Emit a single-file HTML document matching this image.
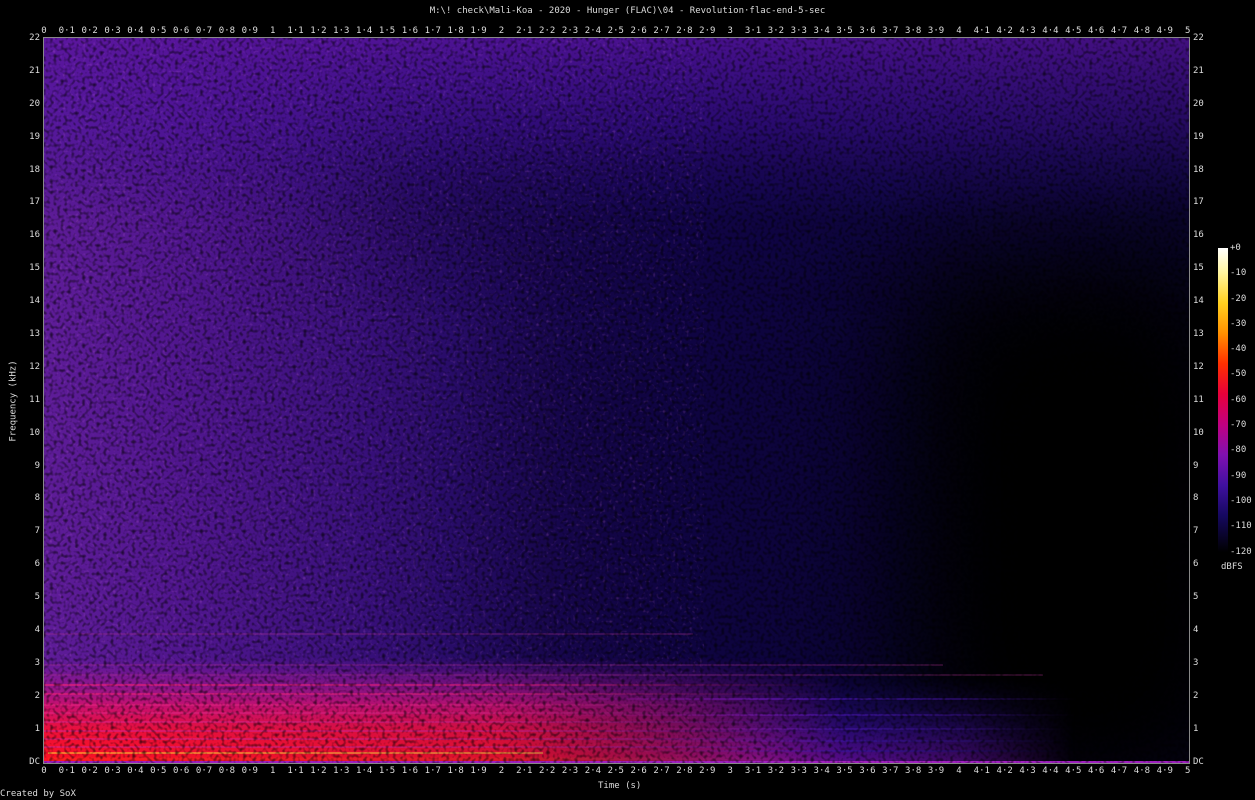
<!DOCTYPE html>
<html><head><meta charset="utf-8"><style>
body{margin:0;background:#000;width:1255px;height:800px;overflow:hidden;position:relative;font-family:"DejaVu Sans Mono","Liberation Mono",monospace;font-size:9px;color:#ddd}
.a{position:absolute;white-space:nowrap}
.trow{position:absolute;left:32.5px;display:flex}
.trow span{width:22.88px;text-align:center;display:block;font-size:9px}
.fl{position:absolute;top:22px;width:30px}
.fl div{height:32.9px;line-height:32.9px;font-size:9px}
.cb{position:absolute;left:1230px;top:242px}
.cb div{height:25.3px;line-height:12px;font-size:9px}
</style></head><body>
<div class="a" style="left:0;width:1255px;text-align:center;top:6px">M:\! check\Mali-Koa - 2020 - Hunger (FLAC)\04 - Revolution·flac-end-5-sec</div>
<div class="trow" style="top:26px"><span>0</span><span>0·1</span><span>0·2</span><span>0·3</span><span>0·4</span><span>0·5</span><span>0·6</span><span>0·7</span><span>0·8</span><span>0·9</span><span>1</span><span>1·1</span><span>1·2</span><span>1·3</span><span>1·4</span><span>1·5</span><span>1·6</span><span>1·7</span><span>1·8</span><span>1·9</span><span>2</span><span>2·1</span><span>2·2</span><span>2·3</span><span>2·4</span><span>2·5</span><span>2·6</span><span>2·7</span><span>2·8</span><span>2·9</span><span>3</span><span>3·1</span><span>3·2</span><span>3·3</span><span>3·4</span><span>3·5</span><span>3·6</span><span>3·7</span><span>3·8</span><span>3·9</span><span>4</span><span>4·1</span><span>4·2</span><span>4·3</span><span>4·4</span><span>4·5</span><span>4·6</span><span>4·7</span><span>4·8</span><span>4·9</span><span>5</span></div>
<div class="trow" style="top:766px"><span>0</span><span>0·1</span><span>0·2</span><span>0·3</span><span>0·4</span><span>0·5</span><span>0·6</span><span>0·7</span><span>0·8</span><span>0·9</span><span>1</span><span>1·1</span><span>1·2</span><span>1·3</span><span>1·4</span><span>1·5</span><span>1·6</span><span>1·7</span><span>1·8</span><span>1·9</span><span>2</span><span>2·1</span><span>2·2</span><span>2·3</span><span>2·4</span><span>2·5</span><span>2·6</span><span>2·7</span><span>2·8</span><span>2·9</span><span>3</span><span>3·1</span><span>3·2</span><span>3·3</span><span>3·4</span><span>3·5</span><span>3·6</span><span>3·7</span><span>3·8</span><span>3·9</span><span>4</span><span>4·1</span><span>4·2</span><span>4·3</span><span>4·4</span><span>4·5</span><span>4·6</span><span>4·7</span><span>4·8</span><span>4·9</span><span>5</span></div>
<div class="fl" style="left:10px;text-align:right"><div>22</div><div>21</div><div>20</div><div>19</div><div>18</div><div>17</div><div>16</div><div>15</div><div>14</div><div>13</div><div>12</div><div>11</div><div>10</div><div>9</div><div>8</div><div>7</div><div>6</div><div>5</div><div>4</div><div>3</div><div>2</div><div>1</div><div>DC</div></div>
<div class="fl" style="left:1193px"><div>22</div><div>21</div><div>20</div><div>19</div><div>18</div><div>17</div><div>16</div><div>15</div><div>14</div><div>13</div><div>12</div><div>11</div><div>10</div><div>9</div><div>8</div><div>7</div><div>6</div><div>5</div><div>4</div><div>3</div><div>2</div><div>1</div><div>DC</div></div>
<div class="a" style="left:598px;top:781px">Time (s)</div>
<div class="a" style="left:-27px;top:396px;transform:rotate(-90deg)">Frequency (kHz)</div>
<div class="a" style="left:0;top:789px">Created by SoX</div>
<div class="a" style="left:1218px;top:248px;width:10px;height:304px;background:linear-gradient(to bottom,#fff 0%,#fff5a0 8%,#ffd020 18%,#ff9000 28%,#ff3000 38%,#e8003a 48%,#c00080 58%,#8010b0 68%,#4010a0 78%,#150860 88%,#000 100%)"></div>
<div class="cb"><div>+0</div><div>-10</div><div>-20</div><div>-30</div><div>-40</div><div>-50</div><div>-60</div><div>-70</div><div>-80</div><div>-90</div><div>-100</div><div>-110</div><div>-120</div></div>
<div class="a" style="left:1221px;top:562px">dBFS</div>
<svg class="a" style="left:43px;top:37px" width="1147" height="727" viewBox="0 0 1147 727">
<defs>
<linearGradient id="h" x1="0" x2="1"><stop offset="0" stop-color="#5e1c98"/><stop offset="0.12" stop-color="#50168e"/><stop offset="0.35" stop-color="#2e0e72"/><stop offset="0.55" stop-color="#1c0860"/><stop offset="0.75" stop-color="#120748"/><stop offset="1" stop-color="#0a0432"/></linearGradient>
<linearGradient id="v" x1="0" y1="0" x2="0" y2="1"><stop offset="0" stop-color="#5a14a0" stop-opacity="0.7"/><stop offset="0.12" stop-color="#4a12a0" stop-opacity="0.4"/><stop offset="0.25" stop-color="#2a0c80" stop-opacity="0"/></linearGradient>
<linearGradient id="r" x1="0" y1="1" x2="0" y2="0"><stop offset="0" stop-color="#ff1020"/><stop offset="0.3" stop-color="#ee1038"/><stop offset="0.55" stop-color="#c81070"/><stop offset="0.8" stop-color="#9a1590" stop-opacity="0.6"/><stop offset="1" stop-color="#7a15a0" stop-opacity="0"/></linearGradient>
<linearGradient id="b" x1="0" y1="1" x2="0" y2="0"><stop offset="0" stop-color="#7a10b0"/><stop offset="0.4" stop-color="#4010a0" stop-opacity="0.8"/><stop offset="1" stop-color="#201080" stop-opacity="0"/></linearGradient>
<linearGradient id="mh" x1="0" x2="1"><stop offset="0" stop-color="#fff"/><stop offset="0.4" stop-color="#fff" stop-opacity="0.85"/><stop offset="0.58" stop-color="#fff" stop-opacity="0.35"/><stop offset="0.7" stop-color="#fff" stop-opacity="0"/></linearGradient>
<linearGradient id="mb" x1="0" x2="1"><stop offset="0.4" stop-color="#fff" stop-opacity="0"/><stop offset="0.62" stop-color="#fff" stop-opacity="0.8"/><stop offset="0.8" stop-color="#fff" stop-opacity="0.5"/><stop offset="0.9" stop-color="#fff" stop-opacity="0"/></linearGradient>
<mask id="m"><rect width="1147" height="727" fill="url(#mh)"/></mask>
<mask id="m2"><rect width="1147" height="727" fill="url(#mb)"/></mask>
<filter id="bl" x="-50%" y="-50%" width="200%" height="200%"><feGaussianBlur stdDeviation="65"/></filter>
<filter id="n"><feTurbulence type="fractalNoise" baseFrequency="0.28" numOctaves="1" seed="3"/><feColorMatrix values="0 0 0 0 0  0 0 0 0 0  0 0 0 0 0  0 0 0 -3 1.6"/></filter>
<filter id="p"><feTurbulence type="fractalNoise" baseFrequency="0.3" numOctaves="1" seed="9"/><feColorMatrix values="0 0 0 0 0.8  0 0 0 0 0.2  0 0 0 0 0.9  0 0 0 4 -2.4"/></filter>
<clipPath id="c"><rect x="1" y="1" width="1145" height="725"/></clipPath>
</defs>
<g clip-path="url(#c)">
<rect x="1" y="1" width="1145" height="725" fill="url(#h)"/>
<rect x="300" y="80" width="500" height="130" fill="#05021a" opacity="0.35" filter="url(#bl)"/>
<rect x="450" y="200" width="500" height="540" fill="#05021a" opacity="0.45" filter="url(#bl)"/>
<rect x="870" y="220" width="320" height="530" fill="#000" filter="url(#bl)"/>
<rect x="930" y="290" width="250" height="450" fill="#000" filter="url(#bl)"/>
<rect x="1" y="1" width="1145" height="725" fill="url(#v)"/>
<rect x="1" y="1" width="600" height="725" filter="url(#p)" opacity="0.2"/>
<g mask="url(#m2)">
<rect x="1" y="640" width="1145" height="86" fill="url(#b)"/>
<g stroke="#5018c0" stroke-width="2" opacity="0.8">
<line x1="1" x2="1146" y1="662" y2="662"/><line x1="1" x2="1146" y1="678" y2="678"/><line x1="1" x2="1146" y1="692" y2="692"/><line x1="1" x2="1146" y1="704" y2="704"/><line x1="1" x2="1146" y1="714" y2="714"/>
</g>
</g>
<g mask="url(#m)">
<rect x="1" y="620" width="1145" height="106" fill="url(#r)"/>
<g stroke="#e0207a" stroke-width="2" opacity="0.7">
<line x1="1" x2="1146" y1="648" y2="648"/><line x1="1" x2="1146" y1="657" y2="657"/><line x1="1" x2="1146" y1="668" y2="668"/><line x1="1" x2="1146" y1="676" y2="676"/><line x1="1" x2="1146" y1="685" y2="685"/><line x1="1" x2="1146" y1="694" y2="694"/><line x1="1" x2="1146" y1="702" y2="702"/><line x1="1" x2="1146" y1="710" y2="710"/>
</g>
<line x1="5" x2="500" y1="716" y2="716" stroke="#ffa030" stroke-width="2" opacity="0.7"/>
<line x1="5" x2="1100" y1="722" y2="722" stroke="#ff2020" stroke-width="3"/>
</g>
<g stroke="#b03090" stroke-width="1" opacity="0.5"><line x1="1" x2="650" y1="597" y2="597"/><line x1="1" x2="900" y1="628" y2="628"/><line x1="1" x2="1000" y1="638" y2="638"/></g>
<line x1="1" x2="1146" y1="725" y2="725" stroke="#a020c0" stroke-width="2"/>
<rect x="1" y="1" width="1145" height="725" filter="url(#n)" opacity="0.6"/>
</g>
<rect x="0.5" y="0.5" width="1146" height="726" fill="none" stroke="#888"/>
</svg>
</body></html>
